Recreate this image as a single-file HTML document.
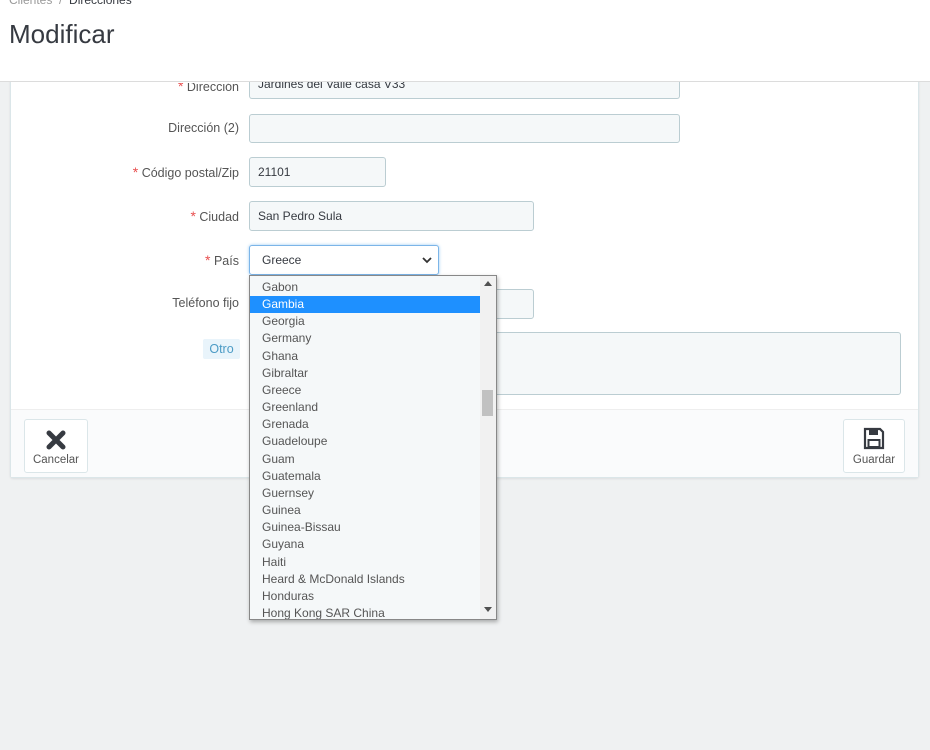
<!DOCTYPE html>
<html><head><meta charset="utf-8"><style>
*{box-sizing:border-box;margin:0;padding:0}
body{width:930px;height:750px;background:#eff1f2;font-family:"Liberation Sans",sans-serif;font-size:12px;color:#363a41;position:relative;overflow:hidden}
.abs{position:absolute}
#panel{left:10px;top:60px;width:909px;height:418px;background:#fff;border:1px solid #dbe6e9;border-radius:3px;box-shadow:0 1px 2px rgba(0,0,0,.08)}
#foot{left:11px;top:409px;width:907px;height:68px;background:#fafbfc;border-top:1px solid #eee}
#head{left:0;top:0;width:930px;height:82px;background:#fff;border-bottom:1px solid #dcdcdc}
.lbl{right:691px;text-align:right;color:#555;font-size:12.5px}
.lbl b{color:#e84e4e;font-weight:normal;font-size:14px}
.inp{left:249px;background:#f5f8f9;border:1px solid #bbcdd2;border-radius:3px;padding-left:8px;font-size:12px;color:#363a41;display:flex;align-items:center}
.btn{background:#fff;border:1px solid #dbe6e9;border-radius:3px;text-align:center;font-size:11.5px;color:#555}
#dd{left:249px;top:275px;width:248px;height:345px;background:#f5f8f9;border:1px solid #888;box-shadow:1px 2px 4px rgba(0,0,0,.3);overflow:hidden}
#dd div.it{height:17.16px;line-height:17px;padding-left:12px;font-size:12px;color:#555;width:231px}
#dd .sel{background:#1e90ff;color:#fff!important}
</style></head><body>
<div id="panel" class="abs"></div>
<div id="foot" class="abs"></div>
<div id="head" class="abs">
<div class="abs" style="left:9px;top:-7px;font-size:12px;color:#999">Clientes &nbsp;/ &nbsp;<span style="color:#363a41">Direcciones</span></div>
<div class="abs" style="left:9px;top:19px;font-size:26px;color:#363a41">Modificar</div>
</div>
<div class="abs lbl" style="top:78px;clip-path:inset(5px 0 0 0)"><b>*</b> Dirección</div>
<div class="abs inp" style="top:72px;width:431px;height:27px;border-top:none;clip-path:inset(10px 0 0 0)"><span style="margin-top:-2px">Jardines del Valle casa V33</span></div>
<div class="abs lbl" style="top:121px">Dirección (2)</div>
<div class="abs inp" style="top:114px;width:431px;height:29px"></div>
<div class="abs lbl" style="top:164px"><b>*</b> Código postal/Zip</div>
<div class="abs inp" style="top:157px;width:137px;height:30px">21101</div>
<div class="abs lbl" style="top:208px"><b>*</b> Ciudad</div>
<div class="abs inp" style="top:201px;width:285px;height:30px">San Pedro Sula</div>
<div class="abs lbl" style="top:252px"><b>*</b> País</div>
<div class="abs inp" style="top:245px;width:190px;height:30px;background:#fff;border-color:#7cb5e8;box-shadow:0 0 3px #9ccbf2;padding-left:12px">Greece
<svg class="abs" style="right:6px;top:10px" width="10" height="8" viewBox="0 0 10 8"><path d="M1 2l4 4 4-4" fill="none" stroke="#333" stroke-width="1.8"/></svg></div>
<div class="abs lbl" style="top:296px">Teléfono fijo</div>
<div class="abs inp" style="top:289px;width:285px;height:30px"></div>
<div class="abs" style="left:203px;top:339px;width:37px;height:20px;background:#e9f4fb;color:#4c9bc5;font-size:12.5px;line-height:20px;text-align:center;border-radius:2px">Otro</div>
<div class="abs inp" style="top:332px;width:652px;height:63px"></div>
<div class="abs btn" style="left:24px;top:419px;width:64px;height:54px">
<svg style="margin-top:10px" width="20" height="20" viewBox="0 0 20 20"><path d="M3 3L17 17M17 3L3 17" stroke="#363a41" stroke-width="5" stroke-linecap="round"/></svg>
<div style="margin-top:1px">Cancelar</div></div>
<div class="abs btn" style="left:843px;top:419px;width:62px;height:54px">
<svg style="margin-top:7px" width="22" height="23" viewBox="0 0 22 23"><path d="M2 2h15l3 3v16H2z" fill="none" stroke="#363a41" stroke-width="2.2"/><rect x="6" y="3" width="9" height="5" fill="#363a41"/><rect x="5.5" y="13" width="11" height="7" fill="none" stroke="#363a41" stroke-width="2"/></svg>
<div style="margin-top:1px">Guardar</div></div>
<div id="dd" class="abs">
<div style="height:3px"></div>
<div class="it">Gabon</div><div class="it sel">Gambia</div><div class="it">Georgia</div><div class="it">Germany</div><div class="it">Ghana</div><div class="it">Gibraltar</div><div class="it">Greece</div><div class="it">Greenland</div><div class="it">Grenada</div><div class="it">Guadeloupe</div><div class="it">Guam</div><div class="it">Guatemala</div><div class="it">Guernsey</div><div class="it">Guinea</div><div class="it">Guinea-Bissau</div><div class="it">Guyana</div><div class="it">Haiti</div><div class="it">Heard &amp; McDonald Islands</div><div class="it">Honduras</div><div class="it">Hong Kong SAR China</div>
<div class="abs" style="right:0;top:0;width:16px;height:343px;background:#f1f1f1"></div>
<div class="abs" style="right:3px;top:114px;width:11px;height:26px;background:#c1c1c1"></div>
<svg class="abs" style="right:4px;top:5px" width="8" height="5"><path d="M0 5L4 0L8 5z" fill="#505050"/></svg>
<svg class="abs" style="right:4px;bottom:7px" width="8" height="5"><path d="M0 0L4 5L8 0z" fill="#505050"/></svg>
</div>
</body></html>
